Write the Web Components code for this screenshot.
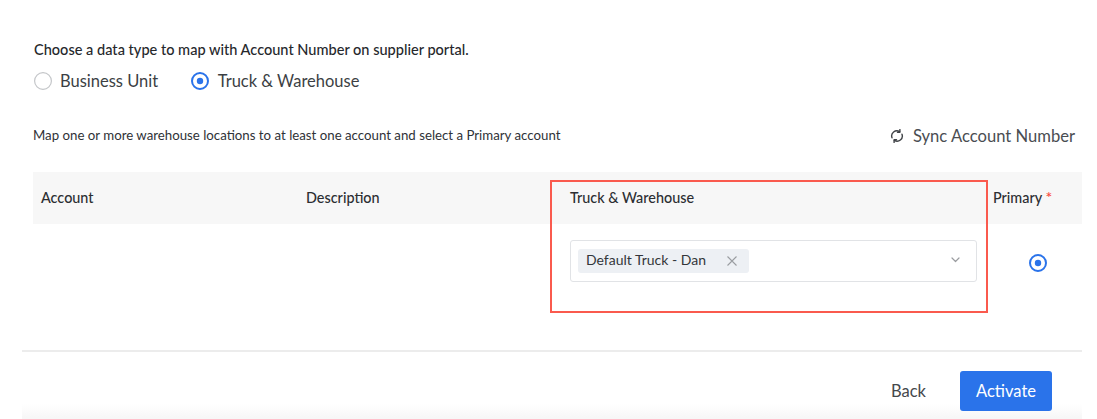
<!DOCTYPE html>
<html>
<head>
<meta charset="utf-8">
<title>Map account</title>
<style>
  html, body { margin: 0; background: #fff; }
  body { width: 1097px; height: 419px; overflow: hidden; font-family: "Lato", "Noto Sans", sans-serif; color: #2f3237; }
</style>
</head>
<body>
<account-map-page>
  <type-picker label="Choose a data type to map with Account Number on supplier portal.">
    <radio-option>Business Unit</radio-option>
    <radio-option checked>Truck &amp; Warehouse</radio-option>
  </type-picker>
  <sync-bar text="Map one or more warehouse locations to at least one account and select a Primary account">Sync Account Number</sync-bar>
  <map-table>
    <tag-select><select-tag>Default Truck - Dan</select-tag></tag-select>
  </map-table>
  <wizard-footer></wizard-footer>
</account-map-page>

<script>
class AccountMapPage extends HTMLElement {
  constructor() {
    super();
    this.attachShadow({ mode: 'open' });
    this.shadowRoot.innerHTML = `
      <style>
        :host { display: block; height: 419px; padding-top: 41px; box-sizing: border-box; }
      </style>
      <slot></slot>
    `;
  }
}

class RadioDot extends HTMLElement {
  constructor() {
    super();
    this.attachShadow({ mode: 'open' });
    this.shadowRoot.innerHTML = `
      <style>
        :host { display: inline-block; width: 18px; height: 18px; flex: none; }
        svg { display: block; }
      </style>
      <svg width="18" height="18" viewBox="0 0 18 18"></svg>
    `;
    this._draw();
  }

  static get observedAttributes() {
    return ['checked'];
  }

  attributeChangedCallback() {
    this._draw();
  }

  _draw() {
    const svg = this.shadowRoot.querySelector('svg');
    if (this.hasAttribute('checked')) {
      svg.innerHTML = '<circle cx="9" cy="9" r="8" fill="#fff" stroke="#2a73ea" stroke-width="2"/><circle cx="9" cy="9" r="3.2" fill="#2a73ea"/>';
    } else {
      svg.innerHTML = '<circle cx="9" cy="9" r="8.4" fill="#fff" stroke="#c4c6c9" stroke-width="1.2"/>';
    }
  }
}

class RadioOption extends HTMLElement {
  constructor() {
    super();
    this.attachShadow({ mode: 'open' });
    this.shadowRoot.innerHTML = `
      <style>
        :host { display: inline-flex; align-items: center; gap: 8px; font-size: 16.5px; color: #3c3f44; }
        radio-dot:last-of-type { margin-right: 0; }
        :host([checked]) { gap: 9px; }
      </style>
      <radio-dot></radio-dot><slot></slot>
    `;
  }
  connectedCallback() {
    if (this.hasAttribute('checked')) this.shadowRoot.querySelector('radio-dot').setAttribute('checked', '');
  }
}

class TypePicker extends HTMLElement {
  constructor() {
    super();
    this.attachShadow({ mode: 'open' });
    this.shadowRoot.innerHTML = `
      <style>
        :host { display: block; padding-left: 34px; }
        .label { font-size: 14.55px; line-height: 18px; font-weight: 500; color: #26282c; }
        .row { display: flex; gap: 32.5px; margin-top: 9px; height: 26px; align-items: center; }
      </style>
      <div class="label"></div>
      <div class="row"><slot></slot></div>
    `;
  }
  connectedCallback() {
    this.shadowRoot.querySelector('.label').textContent = this.getAttribute('label');
  }
}

class SyncBar extends HTMLElement {
  constructor() {
    super();
    this.attachShadow({ mode: 'open' });
    this.shadowRoot.innerHTML = `
      <style>
        :host { display: flex; justify-content: space-between; align-items: center; margin-top: 28px; height: 26px; padding: 0 22px 0 33px; }
        .text { font-size: 13.25px; color: #2f3237; }
        .sync { display: flex; align-items: center; gap: 9px; font-size: 16.6px; line-height: 20px; color: #4a4d52; padding-top: 2px; }
        svg { display: block; }
      </style>
      <span class="text"></span>
      <span class="sync">
        <svg width="14" height="14" viewBox="0 0 14 14" fill="none" stroke="#3f4246" stroke-width="1.4" stroke-linecap="round" stroke-linejoin="round">
          <path d="M2 8.8A5.2 5.2 0 0 1 9.6 2.6"/>
          <path d="M12 5.2A5.2 5.2 0 0 1 4.4 11.4"/>
          <path d="M9.9 0.6V3.2H7.5" />
          <path d="M4.1 13.4V10.8H6.5" />
        </svg>
        <slot></slot>
      </span>
    `;
  }
  connectedCallback() {
    this.shadowRoot.querySelector('.text').textContent = this.getAttribute('text');
  }
}

class MapTable extends HTMLElement {
  constructor() {
    super();
    this.attachShadow({ mode: 'open' });
    this.shadowRoot.innerHTML = `
      <style>
        :host { display: block; position: relative; margin: 24px 15px 0 33px; }
        .row { display: grid; grid-template-columns: 265px 264px 423px 97px; }
        .head { height: 52px; box-sizing: border-box; padding-bottom: 2px; background: #f7f7f7; font-size: 14.4px; font-weight: 500; color: #2c2e32; align-items: center; }
        .head > div { padding-left: 8px; }
        .star { color: #fa4b3e; font-size: 16px; line-height: 1; }
        .body { height: 126px; align-items: start; }
        .cell { padding: 16px 8px 0; }
        .radio { display: flex; justify-content: flex-end; padding: 30px 35px 0 0; }
        .mark { position: absolute; left: 517px; top: 8px; width: 438px; height: 133px; box-sizing: border-box; border: 2px solid #fa5a4e; pointer-events: none; }
      </style>
      <div class="row head">
        <div>Account</div><div>Description</div><div>Truck &amp; Warehouse</div>
        <div>Primary <span class="star">*</span></div>
      </div>
      <div class="row body">
        <div></div><div></div>
        <div class="cell"><slot></slot></div>
        <div class="radio"><radio-dot checked></radio-dot></div>
      </div>
      <div class="mark"></div>
    `;
  }
}

class TagSelect extends HTMLElement {
  constructor() {
    super();
    this.attachShadow({ mode: 'open' });
    this.shadowRoot.innerHTML = `
      <style>
        :host { display: flex; align-items: center; justify-content: space-between; width: 407px; height: 42px; box-sizing: border-box; padding: 0 16px 0 7px; border: 1px solid #e1e3e6; border-radius: 3px; background: #fff; }
        svg { display: block; margin-top: -3px; }
      </style>
      <slot></slot>
      <svg width="9" height="6" viewBox="0 0 9 6" fill="none" stroke="#9a9ca0" stroke-width="1.2" stroke-linecap="round" stroke-linejoin="round"><path d="M1 1L4.5 4.5L8 1"/></svg>
    `;
  }
}

class SelectTag extends HTMLElement {
  constructor() {
    super();
    this.attachShadow({ mode: 'open' });
    this.shadowRoot.innerHTML = `
      <style>
        :host { display: inline-flex; align-items: center; height: 24px; width: 171px; box-sizing: border-box; padding: 0 12px 0 8px; justify-content: space-between; background: #edf0f4; border-radius: 3px; font-size: 14px; color: #33363a; }
        span { display: block; margin-top: -3px; }
        svg { display: block; }
      </style>
      <span><slot></slot></span>
      <svg width="10" height="10" viewBox="0 0 10 10" fill="none" stroke="#9a9da1" stroke-width="1.1"><path d="M0.5 0.5L9.5 9.5M9.5 0.5L0.5 9.5"/></svg>
    `;
  }
}

class WizardFooter extends HTMLElement {
  constructor() {
    super();
    this.attachShadow({ mode: 'open' });
    this.shadowRoot.innerHTML = `
      <style>
        :host { display: block; margin: 0 15px 0 22px; border-top: 2px solid #ececec; height: 69px; box-sizing: border-box; background: linear-gradient(to bottom, #fff 0, #fff 52px, #f7f7f7 66px); }
        .actions { display: flex; justify-content: flex-end; align-items: center; gap: 34px; padding: 19px 30px 0 0; font-size: 16.5px; }
        .back { color: #45484c; }
        button { all: unset; width: 92px; height: 40px; background: #2a73ea; color: #fff; border-radius: 3px; text-align: center; font: inherit; line-height: 40px; }
      </style>
      <div class="actions">
        <span class="back">Back</span>
        <button>Activate</button>
      </div>
    `;
  }
}

customElements.define('radio-dot', RadioDot);
customElements.define('radio-option', RadioOption);
customElements.define('type-picker', TypePicker);
customElements.define('sync-bar', SyncBar);
customElements.define('tag-select', TagSelect);
customElements.define('select-tag', SelectTag);
customElements.define('map-table', MapTable);
customElements.define('wizard-footer', WizardFooter);
customElements.define('account-map-page', AccountMapPage);
</script>
</body>
</html>
